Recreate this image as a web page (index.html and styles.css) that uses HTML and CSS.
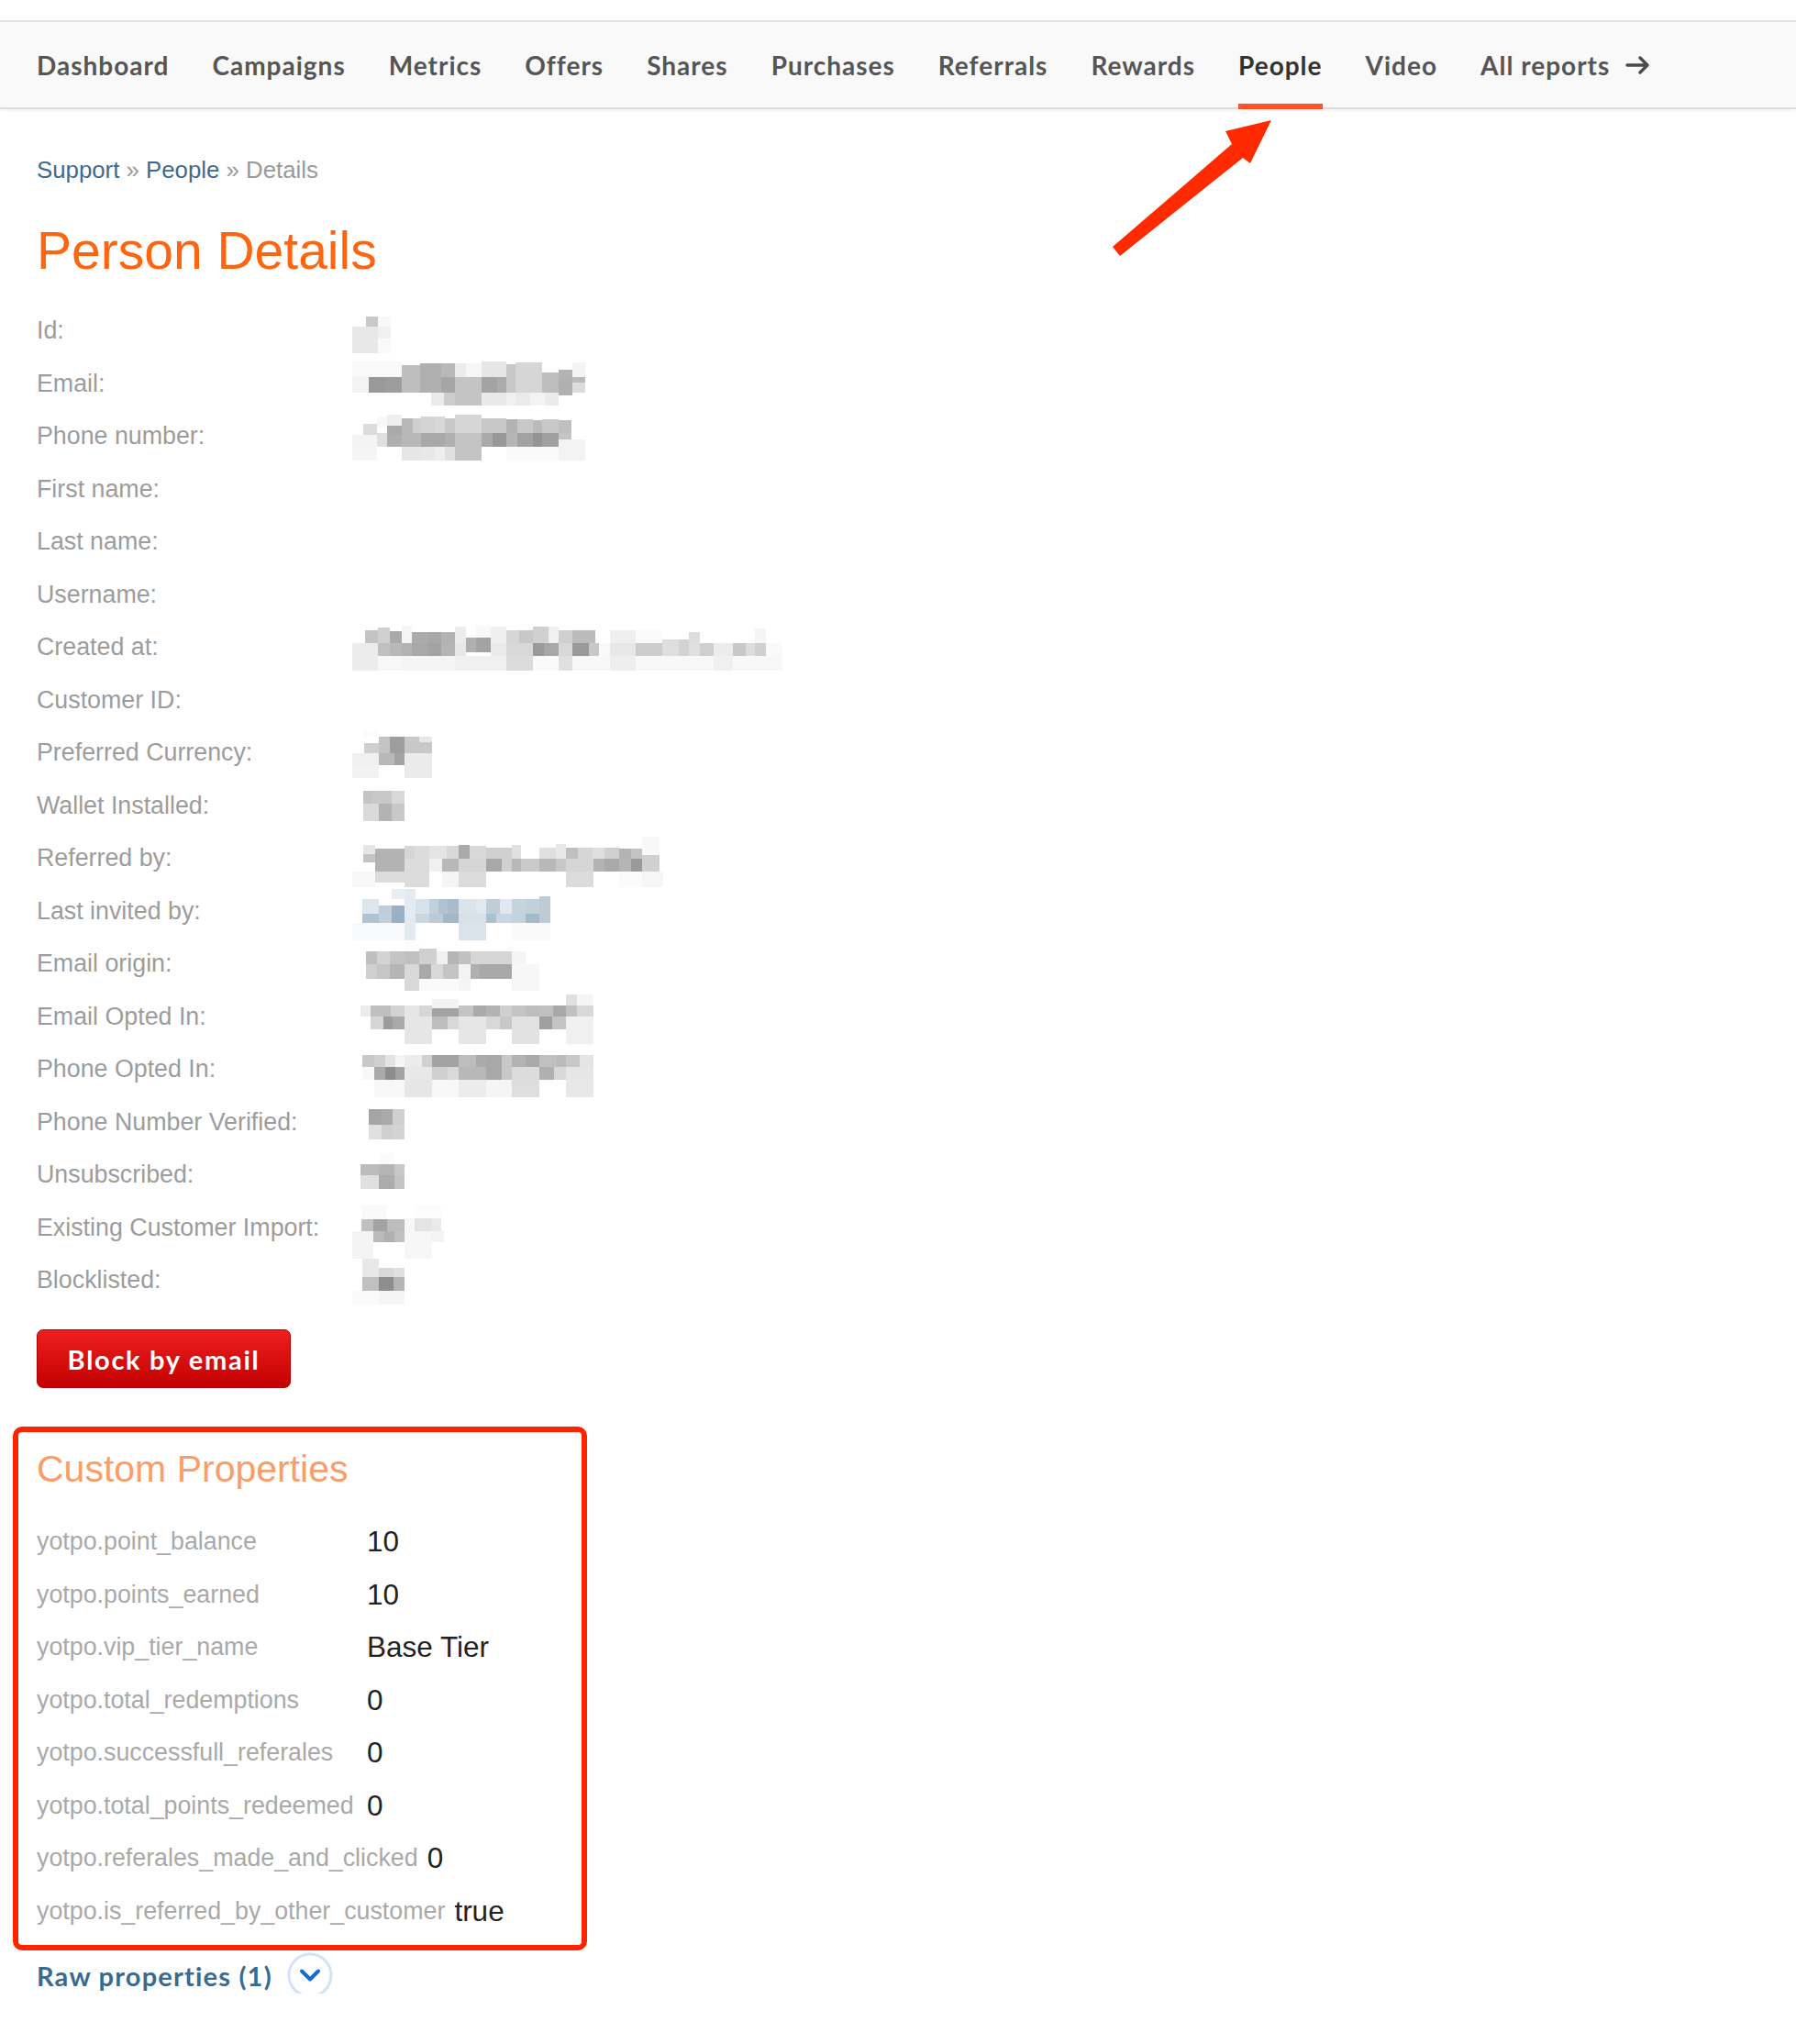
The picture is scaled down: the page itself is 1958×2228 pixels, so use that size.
FILE: index.html
```html
<!DOCTYPE html>
<html lang="en">
<head>
<meta charset="utf-8">
<title>Person Details</title>
<link rel="stylesheet" href="styles.css">
</head>
<body>
<nav class="topnav">
  <a class="nav-item">Dashboard</a>
  <a class="nav-item">Campaigns</a>
  <a class="nav-item">Metrics</a>
  <a class="nav-item">Offers</a>
  <a class="nav-item">Shares</a>
  <a class="nav-item">Purchases</a>
  <a class="nav-item">Referrals</a>
  <a class="nav-item">Rewards</a>
  <a class="nav-item active">People</a>
  <a class="nav-item">Video</a>
  <a class="nav-item">All reports
    <svg class="nav-arrow" width="27" height="22" viewBox="0 0 27 22"><path d="M2 11H24M16 3L24 11L16 19" fill="none" stroke="#4a4a4a" stroke-width="3.4" stroke-linecap="round" stroke-linejoin="round"/></svg>
  </a>
</nav>

<svg class="annot-arrow" width="190" height="160" viewBox="0 0 190 160"><polygon points="8,144 138,32 131,18 181,6 158,53 150,47 16,154" fill="#ff2a00"/></svg>

<main class="page">
  <div class="breadcrumb"><a class="crumb">Support</a> <span class="sep">»</span> <a class="crumb">People</a> <span class="sep">»</span> <span class="current">Details</span></div>
  <h1 class="title">Person Details</h1>

  <div class="details">
    <div class="row"><span class="label">Id:</span>
      <svg class="mosaic" width="42" height="48" shape-rendering="crispEdges"><rect x="15" y="8" width="13" height="11" fill="#c8c8c8"/><rect x="28" y="8" width="14" height="11" fill="#f8f8f8"/><rect x="0" y="19" width="28" height="29" fill="#e8e8e8"/><rect x="28" y="19" width="14" height="13" fill="#f1f1f1"/><rect x="28" y="32" width="14" height="16" fill="#f9f9f9"/></svg>
    </div>
    <div class="row"><span class="label">Email:</span>
      <svg class="mosaic" width="254" height="48" shape-rendering="crispEdges"><rect x="0" y="0" width="54" height="17" fill="#f9f9f9"/><rect x="54" y="4" width="20" height="13" fill="#bebebe"/><rect x="74" y="2" width="23" height="15" fill="#b0b0b0"/><rect x="97" y="2" width="15" height="15" fill="#b8b8b8"/><rect x="112" y="2" width="12" height="15" fill="#ececec"/><rect x="124" y="2" width="17" height="15" fill="#f6f6f6"/><rect x="141" y="0" width="27" height="17" fill="#e6e6e6"/><rect x="168" y="3" width="10" height="14" fill="#c8c8c8"/><rect x="178" y="1" width="29" height="16" fill="#d6d6d6"/><rect x="207" y="12" width="18" height="5" fill="#bdbdbd"/><rect x="225" y="9" width="15" height="8" fill="#b3b3b3"/><rect x="240" y="1" width="14" height="16" fill="#f4f4f4"/><rect x="0" y="17" width="18" height="17" fill="#f3f3f3"/><rect x="18" y="17" width="18" height="17" fill="#999999"/><rect x="36" y="17" width="18" height="17" fill="#9d9d9d"/><rect x="54" y="17" width="20" height="17" fill="#bebebe"/><rect x="74" y="17" width="23" height="17" fill="#b0b0b0"/><rect x="97" y="17" width="15" height="17" fill="#a6a6a6"/><rect x="112" y="17" width="29" height="17" fill="#c4c4c4"/><rect x="141" y="17" width="17" height="17" fill="#a3a3a3"/><rect x="158" y="17" width="10" height="17" fill="#ababab"/><rect x="168" y="17" width="10" height="17" fill="#c8c8c8"/><rect x="178" y="17" width="29" height="17" fill="#d6d6d6"/><rect x="207" y="17" width="18" height="17" fill="#bdbdbd"/><rect x="225" y="17" width="15" height="20" fill="#b0b0b0"/><rect x="240" y="17" width="14" height="6" fill="#bbbbbb"/><rect x="240" y="23" width="14" height="11" fill="#dcdcdc"/><rect x="86" y="34" width="14" height="14" fill="#ebebeb"/><rect x="100" y="34" width="12" height="14" fill="#cccccc"/><rect x="112" y="34" width="29" height="14" fill="#c4c4c4"/><rect x="141" y="34" width="27" height="14" fill="#e9e9e9"/><rect x="168" y="34" width="10" height="14" fill="#f0f0f0"/><rect x="178" y="34" width="16" height="14" fill="#eaeaea"/><rect x="194" y="34" width="16" height="14" fill="#f3f3f3"/><rect x="210" y="34" width="15" height="14" fill="#ebebeb"/></svg>
    </div>
    <div class="row"><span class="label">Phone number:</span>
      <svg class="mosaic" width="254" height="48" shape-rendering="crispEdges"><rect x="27" y="2" width="11" height="12" fill="#f8f8f8"/><rect x="38" y="0" width="16" height="12" fill="#efefef"/><rect x="12" y="10" width="15" height="12" fill="#dcdcdc"/><rect x="38" y="12" width="16" height="10" fill="#aaaaaa"/><rect x="54" y="4" width="12" height="16" fill="#b8b8b8"/><rect x="66" y="4" width="9" height="16" fill="#cfcfcf"/><rect x="75" y="2" width="15" height="18" fill="#d4d4d4"/><rect x="90" y="2" width="11" height="18" fill="#d8d8d8"/><rect x="101" y="4" width="11" height="16" fill="#c8c8c8"/><rect x="112" y="0" width="29" height="20" fill="#d6d6d6"/><rect x="141" y="4" width="27" height="16" fill="#c8c8c8"/><rect x="168" y="5" width="12" height="15" fill="#b3b3b3"/><rect x="180" y="5" width="17" height="15" fill="#c8c8c8"/><rect x="197" y="6" width="10" height="14" fill="#bbbbbb"/><rect x="207" y="5" width="18" height="15" fill="#c8c8c8"/><rect x="225" y="6" width="14" height="14" fill="#c0c0c0"/><rect x="0" y="22" width="27" height="13" fill="#f4f4f4"/><rect x="27" y="20" width="11" height="15" fill="#e0e0e0"/><rect x="38" y="22" width="16" height="13" fill="#afafaf"/><rect x="54" y="20" width="21" height="15" fill="#b8b8b8"/><rect x="75" y="20" width="26" height="15" fill="#a8a8a8"/><rect x="101" y="20" width="11" height="15" fill="#b0b0b0"/><rect x="112" y="20" width="29" height="15" fill="#c4c4c4"/><rect x="141" y="20" width="12" height="15" fill="#aaaaaa"/><rect x="153" y="20" width="15" height="15" fill="#989898"/><rect x="168" y="20" width="12" height="15" fill="#b5b5b5"/><rect x="180" y="20" width="17" height="15" fill="#a2a2a2"/><rect x="197" y="20" width="10" height="15" fill="#949494"/><rect x="207" y="20" width="18" height="15" fill="#a0a0a0"/><rect x="225" y="20" width="14" height="7" fill="#c4c4c4"/><rect x="0" y="35" width="27" height="15" fill="#f5f5f5"/><rect x="54" y="35" width="21" height="15" fill="#e6e6e6"/><rect x="75" y="35" width="15" height="15" fill="#e8e8e8"/><rect x="90" y="35" width="11" height="15" fill="#eeeeee"/><rect x="101" y="35" width="11" height="15" fill="#e0e0e0"/><rect x="112" y="35" width="29" height="15" fill="#c4c4c4"/><rect x="168" y="35" width="57" height="15" fill="#fafafa"/><rect x="225" y="27" width="29" height="23" fill="#f3f3f3"/></svg>
    </div>
    <div class="row"><span class="label">First name:</span></div>
    <div class="row"><span class="label">Last name:</span></div>
    <div class="row"><span class="label">Username:</span></div>
    <div class="row"><span class="label">Created at:</span>
      <svg class="mosaic" width="469" height="48" shape-rendering="crispEdges"><rect x="14" y="5" width="14" height="14" fill="#c4c4c4"/><rect x="28" y="2" width="13" height="17" fill="#d0d0d0"/><rect x="41" y="6" width="13" height="13" fill="#aaaaaa"/><rect x="54" y="0" width="11" height="19" fill="#f5f5f5"/><rect x="65" y="7" width="18" height="12" fill="#acacac"/><rect x="83" y="7" width="14" height="12" fill="#a8a8a8"/><rect x="97" y="7" width="15" height="12" fill="#b3b3b3"/><rect x="112" y="1" width="12" height="18" fill="#ececec"/><rect x="135" y="0" width="16" height="19" fill="#f8f8f8"/><rect x="151" y="1" width="17" height="18" fill="#efefef"/><rect x="168" y="5" width="14" height="14" fill="#d6d6d6"/><rect x="182" y="5" width="15" height="14" fill="#c8c8c8"/><rect x="197" y="1" width="17" height="18" fill="#d0d0d0"/><rect x="214" y="1" width="11" height="18" fill="#f0f0f0"/><rect x="225" y="5" width="15" height="14" fill="#d0d0d0"/><rect x="240" y="5" width="25" height="14" fill="#bbbbbb"/><rect x="281" y="5" width="28" height="14" fill="#efefef"/><rect x="309" y="5" width="29" height="14" fill="#fbfbfb"/><rect x="367" y="7" width="12" height="12" fill="#dddddd"/><rect x="439" y="3" width="12" height="16" fill="#f5f5f5"/><rect x="0" y="19" width="28" height="14" fill="#ececec"/><rect x="28" y="19" width="13" height="14" fill="#c0c0c0"/><rect x="41" y="19" width="13" height="14" fill="#b8b8b8"/><rect x="54" y="19" width="11" height="14" fill="#b3b3b3"/><rect x="65" y="19" width="18" height="14" fill="#a8a8a8"/><rect x="83" y="19" width="14" height="14" fill="#a3a3a3"/><rect x="97" y="19" width="15" height="14" fill="#b5b5b5"/><rect x="112" y="19" width="12" height="14" fill="#e8e8e8"/><rect x="124" y="13" width="11" height="16" fill="#b0b0b0"/><rect x="135" y="13" width="16" height="16" fill="#a3a3a3"/><rect x="151" y="19" width="17" height="14" fill="#eaeaea"/><rect x="168" y="19" width="29" height="14" fill="#d8d8d8"/><rect x="197" y="19" width="12" height="14" fill="#999999"/><rect x="209" y="19" width="16" height="14" fill="#a8a8a8"/><rect x="225" y="19" width="15" height="14" fill="#d8d8d8"/><rect x="240" y="19" width="18" height="14" fill="#999999"/><rect x="258" y="19" width="11" height="14" fill="#c8c8c8"/><rect x="269" y="19" width="12" height="14" fill="#fafafa"/><rect x="281" y="19" width="28" height="14" fill="#e8e8e8"/><rect x="309" y="19" width="29" height="14" fill="#cccccc"/><rect x="338" y="15" width="18" height="18" fill="#dedede"/><rect x="356" y="15" width="11" height="18" fill="#d3d3d3"/><rect x="367" y="19" width="12" height="14" fill="#e0e0e0"/><rect x="379" y="19" width="15" height="14" fill="#cfcfcf"/><rect x="394" y="19" width="21" height="14" fill="#ececec"/><rect x="415" y="19" width="14" height="14" fill="#c8c8c8"/><rect x="429" y="19" width="10" height="14" fill="#dedede"/><rect x="439" y="19" width="12" height="14" fill="#d0d0d0"/><rect x="451" y="19" width="18" height="14" fill="#fafafa"/><rect x="0" y="33" width="28" height="16" fill="#ececec"/><rect x="28" y="33" width="26" height="16" fill="#f8f8f8"/><rect x="54" y="33" width="58" height="16" fill="#f5f5f5"/><rect x="112" y="33" width="56" height="16" fill="#f0f0f0"/><rect x="168" y="33" width="29" height="16" fill="#dcdcdc"/><rect x="197" y="33" width="28" height="16" fill="#fafafa"/><rect x="225" y="33" width="15" height="16" fill="#e0e0e0"/><rect x="240" y="33" width="41" height="16" fill="#f8f8f8"/><rect x="281" y="33" width="28" height="16" fill="#eeeeee"/><rect x="309" y="33" width="85" height="16" fill="#f8f8f8"/><rect x="394" y="33" width="21" height="16" fill="#f0f0f0"/><rect x="415" y="33" width="54" height="16" fill="#f8f8f8"/></svg>
    </div>
    <div class="row"><span class="label">Customer ID:</span></div>
    <div class="row"><span class="label">Preferred Currency:</span>
      <svg class="mosaic" width="87" height="48" shape-rendering="crispEdges"><rect x="13" y="0" width="16" height="6" fill="#fbfbfb"/><rect x="13" y="13" width="16" height="11" fill="#d0d0d0"/><rect x="29" y="6" width="12" height="18" fill="#c4c4c4"/><rect x="41" y="6" width="16" height="18" fill="#9e9e9e"/><rect x="57" y="6" width="16" height="18" fill="#c8c8c8"/><rect x="73" y="6" width="14" height="6" fill="#e8e8e8"/><rect x="73" y="12" width="14" height="12" fill="#c8c8c8"/><rect x="0" y="24" width="29" height="13" fill="#f0f0f0"/><rect x="29" y="24" width="17" height="13" fill="#b8b8b8"/><rect x="46" y="24" width="11" height="13" fill="#a3a3a3"/><rect x="57" y="24" width="30" height="13" fill="#ebebeb"/><rect x="0" y="37" width="29" height="14" fill="#f2f2f2"/><rect x="57" y="37" width="30" height="14" fill="#ebebeb"/></svg>
    </div>
    <div class="row"><span class="label">Wallet Installed:</span>
      <svg class="mosaic" width="57" height="48" shape-rendering="crispEdges"><rect x="12" y="8" width="10" height="14" fill="#c4c4c4"/><rect x="22" y="8" width="21" height="14" fill="#c8c8c8"/><rect x="43" y="8" width="14" height="14" fill="#d8d8d8"/><rect x="12" y="22" width="17" height="19" fill="#dadada"/><rect x="29" y="22" width="14" height="19" fill="#b3b3b3"/><rect x="43" y="22" width="14" height="19" fill="#c8c8c8"/></svg>
    </div>
    <div class="row"><span class="label">Referred by:</span>
      <svg class="mosaic" width="339" height="48" shape-rendering="crispEdges"><rect x="12" y="9" width="13" height="10" fill="#e6e6e6"/><rect x="25" y="13" width="32" height="11" fill="#b3b3b3"/><rect x="57" y="10" width="11" height="14" fill="#d6d6d6"/><rect x="68" y="10" width="16" height="14" fill="#dcdcdc"/><rect x="84" y="10" width="19" height="14" fill="#e4e4e4"/><rect x="103" y="10" width="13" height="14" fill="#d8d8d8"/><rect x="116" y="9" width="12" height="15" fill="#aaaaaa"/><rect x="128" y="10" width="18" height="14" fill="#d8d8d8"/><rect x="146" y="12" width="28" height="12" fill="#d0d0d0"/><rect x="174" y="9" width="10" height="15" fill="#e0e0e0"/><rect x="204" y="12" width="18" height="12" fill="#e0e0e0"/><rect x="222" y="8" width="11" height="16" fill="#e8e8e8"/><rect x="233" y="12" width="13" height="12" fill="#c0c0c0"/><rect x="246" y="12" width="16" height="12" fill="#d6d6d6"/><rect x="262" y="12" width="13" height="12" fill="#dedede"/><rect x="275" y="12" width="16" height="12" fill="#d0d0d0"/><rect x="291" y="13" width="13" height="11" fill="#b3b3b3"/><rect x="304" y="13" width="12" height="11" fill="#c4c4c4"/><rect x="316" y="0" width="19" height="20" fill="#f8f8f8"/><rect x="12" y="19" width="13" height="9" fill="#c4c4c4"/><rect x="25" y="24" width="32" height="14" fill="#b3b3b3"/><rect x="57" y="24" width="27" height="14" fill="#dcdcdc"/><rect x="84" y="24" width="14" height="14" fill="#f0f0f0"/><rect x="98" y="24" width="18" height="14" fill="#b8b8b8"/><rect x="116" y="24" width="30" height="14" fill="#d6d6d6"/><rect x="146" y="24" width="17" height="14" fill="#a8a8a8"/><rect x="163" y="24" width="11" height="14" fill="#d0d0d0"/><rect x="174" y="24" width="10" height="14" fill="#b8b8b8"/><rect x="184" y="24" width="20" height="14" fill="#cacaca"/><rect x="204" y="24" width="18" height="14" fill="#b8b8b8"/><rect x="222" y="24" width="11" height="14" fill="#c8c8c8"/><rect x="233" y="24" width="30" height="14" fill="#d6d6d6"/><rect x="263" y="24" width="12" height="14" fill="#b3b3b3"/><rect x="275" y="24" width="16" height="14" fill="#aaaaaa"/><rect x="291" y="24" width="13" height="14" fill="#b5b5b5"/><rect x="304" y="24" width="12" height="14" fill="#9a9a9a"/><rect x="316" y="20" width="19" height="18" fill="#d0d0d0"/><rect x="0" y="38" width="25" height="17" fill="#f8f8f8"/><rect x="25" y="38" width="32" height="12" fill="#dcdcdc"/><rect x="57" y="38" width="27" height="17" fill="#dcdcdc"/><rect x="98" y="38" width="18" height="17" fill="#f5f5f5"/><rect x="116" y="38" width="30" height="17" fill="#dcdcdc"/><rect x="233" y="38" width="30" height="17" fill="#dcdcdc"/><rect x="291" y="38" width="25" height="17" fill="#fbfbfb"/><rect x="316" y="38" width="23" height="17" fill="#f6f6f6"/></svg>
    </div>
    <div class="row"><span class="label">Last invited by:</span>
      <svg class="mosaic" width="216" height="48" shape-rendering="crispEdges"><rect x="57" y="0" width="12" height="56" fill="#e3eaf0"/><rect x="43" y="0" width="14" height="11" fill="#e8eef3"/><rect x="11" y="11" width="18" height="16" fill="#dde5ed"/><rect x="29" y="18" width="14" height="9" fill="#c0cdd8"/><rect x="43" y="18" width="14" height="9" fill="#9ab2c4"/><rect x="69" y="11" width="15" height="16" fill="#d8e2eb"/><rect x="84" y="11" width="10" height="16" fill="#c2d0db"/><rect x="94" y="11" width="10" height="16" fill="#b0c3d1"/><rect x="104" y="11" width="12" height="16" fill="#a8bccc"/><rect x="116" y="11" width="19" height="16" fill="#dce4eb"/><rect x="135" y="11" width="11" height="16" fill="#e2e8ee"/><rect x="146" y="11" width="15" height="16" fill="#bfcdd8"/><rect x="161" y="11" width="13" height="16" fill="#e2e8ef"/><rect x="174" y="11" width="15" height="16" fill="#c5d3dd"/><rect x="189" y="11" width="15" height="16" fill="#c2d0da"/><rect x="204" y="8" width="12" height="19" fill="#bccbd6"/><rect x="11" y="27" width="18" height="10" fill="#b0c3d2"/><rect x="29" y="27" width="14" height="10" fill="#c0cfda"/><rect x="43" y="27" width="14" height="10" fill="#98b0c3"/><rect x="69" y="27" width="15" height="10" fill="#c8d6e0"/><rect x="84" y="27" width="15" height="10" fill="#bccbd7"/><rect x="99" y="27" width="17" height="10" fill="#a2b8c9"/><rect x="116" y="27" width="30" height="10" fill="#d8e1ea"/><rect x="146" y="27" width="11" height="10" fill="#adc0ce"/><rect x="157" y="27" width="17" height="10" fill="#cad6e0"/><rect x="174" y="27" width="15" height="10" fill="#c4d2dc"/><rect x="189" y="27" width="15" height="10" fill="#a3bacb"/><rect x="204" y="27" width="12" height="10" fill="#bccbd6"/><rect x="0" y="37" width="57" height="19" fill="#f8f9fb"/><rect x="116" y="37" width="30" height="19" fill="#dbe3ea"/><rect x="174" y="37" width="42" height="19" fill="#f9f9f9"/></svg>
    </div>
    <div class="row"><span class="label">Email origin:</span>
      <svg class="mosaic" width="204" height="48" shape-rendering="crispEdges"><rect x="57" y="0" width="16" height="10" fill="#fdfdfd"/><rect x="15" y="10" width="12" height="14" fill="#bfbfbf"/><rect x="27" y="10" width="14" height="14" fill="#d3d3d3"/><rect x="41" y="10" width="16" height="14" fill="#c4c4c4"/><rect x="57" y="10" width="16" height="14" fill="#c0c0c0"/><rect x="73" y="7" width="19" height="17" fill="#d0d0d0"/><rect x="92" y="10" width="12" height="14" fill="#f0f0f0"/><rect x="104" y="10" width="12" height="14" fill="#b5b5b5"/><rect x="116" y="10" width="13" height="14" fill="#c0c0c0"/><rect x="129" y="10" width="45" height="14" fill="#d6d6d6"/><rect x="174" y="10" width="15" height="14" fill="#f5f5f5"/><rect x="15" y="24" width="12" height="16" fill="#cfcfcf"/><rect x="27" y="24" width="14" height="16" fill="#c6c6c6"/><rect x="41" y="24" width="16" height="16" fill="#b5b5b5"/><rect x="57" y="24" width="16" height="16" fill="#d8d8d8"/><rect x="73" y="24" width="13" height="16" fill="#a8a8a8"/><rect x="86" y="24" width="13" height="16" fill="#d8d8d8"/><rect x="99" y="24" width="17" height="16" fill="#c4c4c4"/><rect x="116" y="24" width="13" height="16" fill="#f3f3f3"/><rect x="129" y="24" width="10" height="16" fill="#b0b0b0"/><rect x="139" y="24" width="35" height="16" fill="#a8a8a8"/><rect x="174" y="24" width="30" height="16" fill="#f7f7f7"/><rect x="57" y="40" width="16" height="13" fill="#d8d8d8"/><rect x="73" y="40" width="43" height="13" fill="#fafafa"/><rect x="116" y="40" width="13" height="13" fill="#f5f5f5"/><rect x="174" y="40" width="30" height="13" fill="#f7f7f7"/></svg>
    </div>
    <div class="row"><span class="label">Email Opted In:</span>
      <svg class="mosaic" width="263" height="48" shape-rendering="crispEdges"><rect x="9" y="12" width="11" height="12" fill="#ececec"/><rect x="20" y="12" width="22" height="12" fill="#bfbfbf"/><rect x="42" y="12" width="15" height="12" fill="#d3d3d3"/><rect x="57" y="12" width="16" height="12" fill="#e6e6e6"/><rect x="73" y="12" width="14" height="12" fill="#d6d6d6"/><rect x="87" y="5" width="29" height="10" fill="#f3f3f3"/><rect x="87" y="15" width="29" height="9" fill="#a3a3a3"/><rect x="116" y="12" width="16" height="12" fill="#c4c4c4"/><rect x="132" y="12" width="14" height="12" fill="#aaaaaa"/><rect x="146" y="12" width="15" height="12" fill="#b3b3b3"/><rect x="161" y="12" width="13" height="12" fill="#cfcfcf"/><rect x="174" y="12" width="15" height="12" fill="#c4c4c4"/><rect x="189" y="12" width="15" height="12" fill="#bdbdbd"/><rect x="204" y="12" width="15" height="12" fill="#c0c0c0"/><rect x="219" y="12" width="14" height="12" fill="#a8a8a8"/><rect x="233" y="0" width="12" height="12" fill="#e0e0e0"/><rect x="233" y="12" width="12" height="12" fill="#c0c0c0"/><rect x="245" y="0" width="18" height="12" fill="#f5f5f5"/><rect x="245" y="12" width="18" height="12" fill="#d8d8d8"/><rect x="20" y="24" width="14" height="14" fill="#d6d6d6"/><rect x="34" y="24" width="10" height="14" fill="#9c9c9c"/><rect x="44" y="24" width="13" height="14" fill="#aaaaaa"/><rect x="57" y="24" width="30" height="14" fill="#e6e6e6"/><rect x="87" y="24" width="17" height="14" fill="#bdbdbd"/><rect x="104" y="24" width="12" height="14" fill="#d8d8d8"/><rect x="116" y="24" width="30" height="14" fill="#e6e6e6"/><rect x="146" y="24" width="15" height="14" fill="#d8d8d8"/><rect x="161" y="24" width="13" height="14" fill="#c8c8c8"/><rect x="174" y="24" width="30" height="14" fill="#e2e2e2"/><rect x="204" y="24" width="14" height="14" fill="#a0a0a0"/><rect x="218" y="24" width="15" height="14" fill="#c4c4c4"/><rect x="233" y="24" width="30" height="14" fill="#f0f0f0"/><rect x="57" y="38" width="30" height="16" fill="#e6e6e6"/><rect x="116" y="38" width="30" height="16" fill="#e6e6e6"/><rect x="174" y="38" width="30" height="16" fill="#e2e2e2"/><rect x="233" y="38" width="30" height="16" fill="#f0f0f0"/></svg>
    </div>
    <div class="row"><span class="label">Phone Opted In:</span>
      <svg class="mosaic" width="263" height="48" shape-rendering="crispEdges"><rect x="11" y="8" width="13" height="13" fill="#c8c8c8"/><rect x="24" y="8" width="12" height="13" fill="#d0d0d0"/><rect x="36" y="8" width="11" height="13" fill="#e4e4e4"/><rect x="47" y="8" width="10" height="13" fill="#f5f5f5"/><rect x="57" y="8" width="19" height="13" fill="#ececec"/><rect x="76" y="8" width="11" height="13" fill="#d0d0d0"/><rect x="87" y="8" width="29" height="13" fill="#a3a3a3"/><rect x="116" y="8" width="19" height="13" fill="#bdbdbd"/><rect x="135" y="8" width="11" height="13" fill="#aaaaaa"/><rect x="146" y="8" width="17" height="13" fill="#a8a8a8"/><rect x="163" y="8" width="11" height="13" fill="#c8c8c8"/><rect x="174" y="8" width="15" height="13" fill="#b3b3b3"/><rect x="189" y="8" width="15" height="13" fill="#aaaaaa"/><rect x="204" y="8" width="19" height="13" fill="#c0c0c0"/><rect x="223" y="8" width="10" height="13" fill="#bbbbbb"/><rect x="233" y="8" width="15" height="13" fill="#c8c8c8"/><rect x="248" y="8" width="15" height="13" fill="#e4e4e4"/><rect x="11" y="21" width="13" height="14" fill="#f8f8f8"/><rect x="24" y="21" width="12" height="14" fill="#aaaaaa"/><rect x="36" y="21" width="11" height="14" fill="#8c8c8c"/><rect x="47" y="21" width="10" height="14" fill="#a3a3a3"/><rect x="57" y="21" width="30" height="14" fill="#e8e8e8"/><rect x="87" y="21" width="17" height="14" fill="#d0d0d0"/><rect x="104" y="21" width="12" height="14" fill="#dadada"/><rect x="116" y="21" width="30" height="14" fill="#b8b8b8"/><rect x="146" y="21" width="17" height="14" fill="#a8a8a8"/><rect x="163" y="21" width="11" height="14" fill="#c8c8c8"/><rect x="174" y="21" width="30" height="14" fill="#dcdcdc"/><rect x="204" y="21" width="16" height="14" fill="#b0b0b0"/><rect x="220" y="21" width="13" height="14" fill="#d8d8d8"/><rect x="233" y="21" width="30" height="14" fill="#e6e6e6"/><rect x="24" y="35" width="33" height="19" fill="#f8f8f8"/><rect x="57" y="35" width="30" height="19" fill="#e6e6e6"/><rect x="87" y="35" width="29" height="19" fill="#f8f8f8"/><rect x="116" y="35" width="30" height="19" fill="#ececec"/><rect x="146" y="35" width="28" height="19" fill="#f5f5f5"/><rect x="174" y="35" width="30" height="19" fill="#dedede"/><rect x="233" y="35" width="30" height="19" fill="#e8e8e8"/></svg>
    </div>
    <div class="row"><span class="label">Phone Number Verified:</span>
      <svg class="mosaic" width="57" height="48" shape-rendering="crispEdges"><rect x="18" y="10" width="14" height="17" fill="#a5a5a5"/><rect x="32" y="10" width="12" height="17" fill="#aaaaaa"/><rect x="44" y="10" width="13" height="17" fill="#d0d0d0"/><rect x="18" y="27" width="14" height="16" fill="#e0e0e0"/><rect x="32" y="27" width="12" height="16" fill="#cfcfcf"/><rect x="44" y="27" width="13" height="16" fill="#d3d3d3"/></svg>
    </div>
    <div class="row"><span class="label">Unsubscribed:</span>
      <svg class="mosaic" width="57" height="48" shape-rendering="crispEdges"><rect x="29" y="0" width="17" height="12" fill="#fbfbfb"/><rect x="9" y="12" width="20" height="12" fill="#bcbcbc"/><rect x="29" y="12" width="17" height="12" fill="#b5b5b5"/><rect x="46" y="12" width="11" height="12" fill="#c8c8c8"/><rect x="9" y="24" width="20" height="15" fill="#e0e0e0"/><rect x="29" y="24" width="17" height="15" fill="#acacac"/><rect x="46" y="24" width="11" height="15" fill="#c4c4c4"/></svg>
    </div>
    <div class="row"><span class="label">Existing Customer Import:</span>
      <svg class="mosaic" width="100" height="48" shape-rendering="crispEdges"><rect x="10" y="0" width="28" height="15" fill="#f9f9f9"/><rect x="68" y="0" width="29" height="14" fill="#fcfcfc"/><rect x="57" y="14" width="11" height="44" fill="#f7f7f7"/><rect x="10" y="15" width="13" height="13" fill="#c0c0c0"/><rect x="23" y="15" width="15" height="13" fill="#a3a3a3"/><rect x="38" y="15" width="19" height="13" fill="#bcbcbc"/><rect x="68" y="14" width="19" height="14" fill="#e4e4e4"/><rect x="87" y="14" width="10" height="14" fill="#eaeaea"/><rect x="0" y="28" width="23" height="12" fill="#f4f4f4"/><rect x="23" y="28" width="12" height="12" fill="#bababa"/><rect x="35" y="28" width="11" height="12" fill="#b0b0b0"/><rect x="46" y="28" width="11" height="12" fill="#c0c0c0"/><rect x="68" y="28" width="19" height="12" fill="#f6f6f6"/><rect x="87" y="28" width="13" height="12" fill="#f3f3f3"/><rect x="0" y="40" width="23" height="18" fill="#f4f4f4"/><rect x="68" y="40" width="19" height="18" fill="#f7f7f7"/></svg>
    </div>
    <div class="row"><span class="label">Blocklisted:</span>
      <svg class="mosaic" width="57" height="48" shape-rendering="crispEdges"><rect x="11" y="0" width="18" height="20" fill="#e8e8e8"/><rect x="29" y="10" width="16" height="10" fill="#d8d8d8"/><rect x="45" y="10" width="12" height="10" fill="#e0e0e0"/><rect x="11" y="20" width="18" height="15" fill="#c0c0c0"/><rect x="29" y="20" width="16" height="15" fill="#8e8e8e"/><rect x="45" y="20" width="12" height="15" fill="#b5b5b5"/><rect x="0" y="35" width="29" height="15" fill="#fafafa"/><rect x="29" y="35" width="28" height="15" fill="#f5f5f5"/></svg>
    </div>
  </div>

  <button class="btn-block" type="button">Block by email</button>

  <section class="custom">
    <h2 class="custom-title">Custom Properties</h2>
    <div class="custom-rows">
      <div class="crow"><span class="clabel">yotpo.point_balance</span><span class="cvalue">10</span></div>
      <div class="crow"><span class="clabel">yotpo.points_earned</span><span class="cvalue">10</span></div>
      <div class="crow"><span class="clabel">yotpo.vip_tier_name</span><span class="cvalue">Base Tier</span></div>
      <div class="crow"><span class="clabel">yotpo.total_redemptions</span><span class="cvalue">0</span></div>
      <div class="crow"><span class="clabel">yotpo.successfull_referales</span><span class="cvalue">0</span></div>
      <div class="crow"><span class="clabel">yotpo.total_points_redeemed</span><span class="cvalue">0</span></div>
      <div class="crow"><span class="clabel">yotpo.referales_made_and_clicked</span><span class="cvalue">0</span></div>
      <div class="crow"><span class="clabel">yotpo.is_referred_by_other_customer</span><span class="cvalue">true</span></div>
    </div>
  </section>

  <div class="raw">
    <a class="raw-link">Raw properties (1)</a>
    <svg class="raw-toggle" width="50" height="50" viewBox="0 0 50 50"><circle cx="25" cy="25" r="23" fill="none" stroke="#d3e2f7" stroke-width="3"/><path d="M16 20.5L25 29.5L34 20.5" fill="none" stroke="#1769d4" stroke-width="4" stroke-linecap="round" stroke-linejoin="round"/></svg>
  </div>
</main>
</body>
</html>
```

FILE: styles.css
```css
html, body {
  margin: 0;
  padding: 0;
  background: #ffffff;
}

body {
  position: relative;
  font-family: "Liberation Sans", Arial, Helvetica, sans-serif;
  color: #333;
}

/* ---------- top navigation ---------- */
.topnav {
  margin-top: 22px;
  height: 93px;
  display: flex;
  gap: 47px;
  padding-left: 40px;
  background: #f9f9f9;
  border-top: 2px solid #e2e2e2;
  border-bottom: 2px solid #dddddd;
  box-shadow: 0 2px 3px rgba(0, 0, 0, 0.05);
}

.nav-item {
  position: relative;
  display: flex;
  align-items: center;
  gap: 17px;
  font-family: Lato, "Open Sans", sans-serif;
  font-weight: 700;
  font-size: 28px;
  letter-spacing: 1px;
  color: #555555;
  white-space: nowrap;
  cursor: pointer;
}

.nav-item.active {
  color: #333333;
}

.nav-item.active::after {
  content: "";
  position: absolute;
  left: 0;
  right: 0;
  bottom: -2px;
  height: 6px;
  background: #ff5122;
}

.nav-arrow {
  display: block;
}

/* annotation arrow drawn over the page */
.annot-arrow {
  position: absolute;
  left: 1205px;
  top: 125px;
}

/* ---------- page ---------- */
.page {
  padding: 0 40px;
}

.breadcrumb {
  margin-top: 51px;
  font-size: 25.8px;
  line-height: 30px;
  color: #999999;
}

.crumb {
  color: #3d6a8e;
  text-decoration: none;
}

.sep {
  color: #9a9a9a;
}

.current {
  color: #999999;
}

.title {
  margin: 40px 0 0;
  font-size: 57px;
  line-height: 67px;
  font-weight: normal;
  color: #ff640f;
}

.details {
  margin-top: 25px;
}

.row {
  display: flex;
  align-items: center;
  height: 57.5px;
}

.label {
  flex: none;
  width: 344px;
  font-size: 26.8px;
  color: #9c9c9c;
}

.mosaic {
  display: block;
  overflow: visible;
}

.btn-block {
  display: block;
  margin-top: 24.5px;
  width: 277px;
  height: 64px;
  padding: 0;
  border: 1px solid #b40000;
  border-radius: 7px;
  background: linear-gradient(#ef1f1f, #c30000);
  color: #ffffff;
  font-family: Lato, "Open Sans", sans-serif;
  font-weight: 700;
  font-size: 29px;
  letter-spacing: 1.7px;
  cursor: pointer;
}

/* ---------- custom properties (annotated box) ---------- */
.custom {
  margin-top: 42px;
  margin-left: -26px;
  width: 626px;
  box-sizing: border-box;
  border: 6px solid #ff2400;
  border-radius: 10px;
  padding: 16px 0 8px 20px;
}

.custom-title {
  margin: 0;
  font-size: 41px;
  line-height: 48px;
  font-weight: normal;
  color: #fa9d69;
}

.custom-rows {
  margin-top: 27px;
}

.crow {
  display: flex;
  align-items: center;
  height: 57.5px;
}

.clabel {
  flex: none;
  min-width: 350px;
  padding-right: 10px;
  font-size: 26.8px;
  color: #a9a9a9;
}

.cvalue {
  font-size: 31.5px;
  color: #222222;
}

.raw {
  margin-top: 7px;
  height: 40px;
  display: flex;
  align-items: center;
  gap: 16px;
}

.raw-link {
  font-family: Lato, "Open Sans", sans-serif;
  font-weight: 700;
  font-size: 29px;
  letter-spacing: 1.2px;
  color: #3a6a8f;
  cursor: pointer;
}

.raw-toggle {
  display: block;
  flex: none;
}
```
